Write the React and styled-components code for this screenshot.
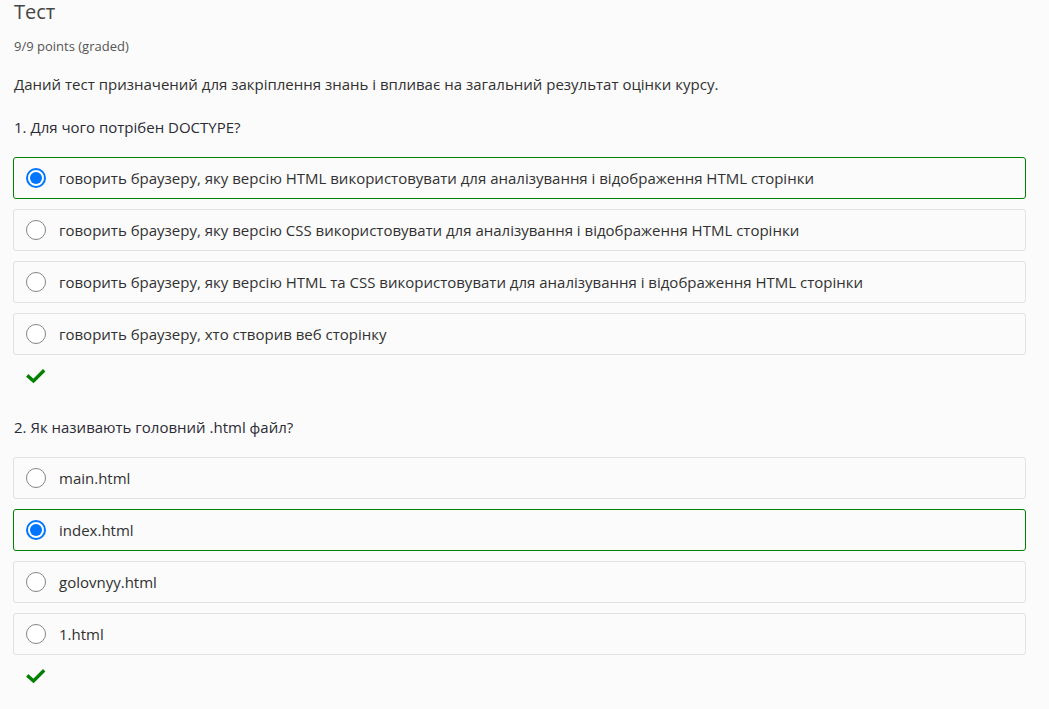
import React from "react";
import styled, { createGlobalStyle } from "styled-components";

const GlobalStyle = createGlobalStyle`
  html, body {
    margin: 0;
    padding: 0;
    background: #fbfbfb;
  }
  body {
    font-family: "Open Sans", "Noto Sans", sans-serif;
    color: #313131;
  }
`;

const Page = styled.div`
  padding: 0 23px 0 13px;
  width: 1013px;
`;

const Title = styled.h2`
  margin: 0 0 0 1px;
  font-size: 20px;
  line-height: 24px;
  font-weight: 400;
  color: #454545;
`;

const Points = styled.div`
  margin: 13px 0 0 1px;
  font-size: 13px;
  line-height: 18px;
  color: #555;
`;

const Description = styled.p`
  margin: 19px 0 0 1px;
  font-size: 15px;
  line-height: 21px;
  color: #313131;
`;

const Question = styled.section`
  margin-top: ${(p) => p.$top}px;
`;

const Prompt = styled.div`
  margin-left: 1px;
  font-size: 15px;
  line-height: 21px;
  color: #2b2b36;
`;

const Options = styled.div`
  display: flex;
  flex-direction: column;
  gap: 10px;
  margin-top: 19px;
`;

const Option = styled.label`
  display: flex;
  align-items: center;
  gap: 13px;
  box-sizing: border-box;
  height: 42px;
  padding: 0 12px;
  border: 1px solid ${(p) => (p.$selected ? "#008100" : "#e2e2e2")};
  border-radius: 3px;
  background: #fbfbfb;
  font-size: 15px;
  color: #313131;
`;

const Radio = styled.span`
  flex: none;
  position: relative;
  box-sizing: border-box;
  width: 20px;
  height: 20px;
  border-radius: 50%;
  border: ${(p) => (p.$checked ? "2px solid #0075ff" : "1px solid #858585")};
  background: #fff;

  &::after {
    content: "";
    display: ${(p) => (p.$checked ? "block" : "none")};
    position: absolute;
    inset: 2px;
    border-radius: 50%;
    background: #0075ff;
  }
`;

const Status = styled.div`
  height: 16px;
  margin: 13px 0 0 13px;
  display: flex;
  align-items: center;
`;

const CheckMark = () => (
  <svg width="20" height="16" viewBox="0 0 20 16">
    <path
      d="M2.5 8.5 L7.5 13 L17 3.5"
      fill="none"
      stroke="#008100"
      strokeWidth="3.4"
      strokeLinecap="square"
      strokeLinejoin="miter"
    />
  </svg>
);

const questions = [
  {
    text: "1. Для чого потрібен DOCTYPE?",
    top: 22,
    selected: 0,
    options: [
      "говорить браузеру, яку версію HTML використовувати для аналізування і відображення HTML сторінки",
      "говорить браузеру, яку версію CSS використовувати для аналізування і відображення HTML сторінки",
      "говорить браузеру, яку версію HTML та CSS використовувати для аналізування і відображення HTML сторінки",
      "говорить браузеру, хто створив веб сторінку",
    ],
  },
  {
    text: "2. Як називають головний .html файл?",
    top: 33,
    selected: 1,
    options: ["main.html", "index.html", "golovnyy.html", "1.html"],
  },
];

export default function App() {
  return (
    <>
      <GlobalStyle />
      <Page>
        <Title>Тест</Title>
        <Points>9/9 points (graded)</Points>
        <Description>
          Даний тест призначений для закріплення знань і впливає на загальний результат оцінки курсу.
        </Description>
        {questions.map((q) => (
          <Question key={q.text} $top={q.top}>
            <Prompt>{q.text}</Prompt>
            <Options>
              {q.options.map((o, i) => (
                <Option key={o} $selected={i === q.selected}>
                  <Radio $checked={i === q.selected} />
                  {o}
                </Option>
              ))}
            </Options>
            <Status>
              <CheckMark />
            </Status>
          </Question>
        ))}
      </Page>
    </>
  );
}
